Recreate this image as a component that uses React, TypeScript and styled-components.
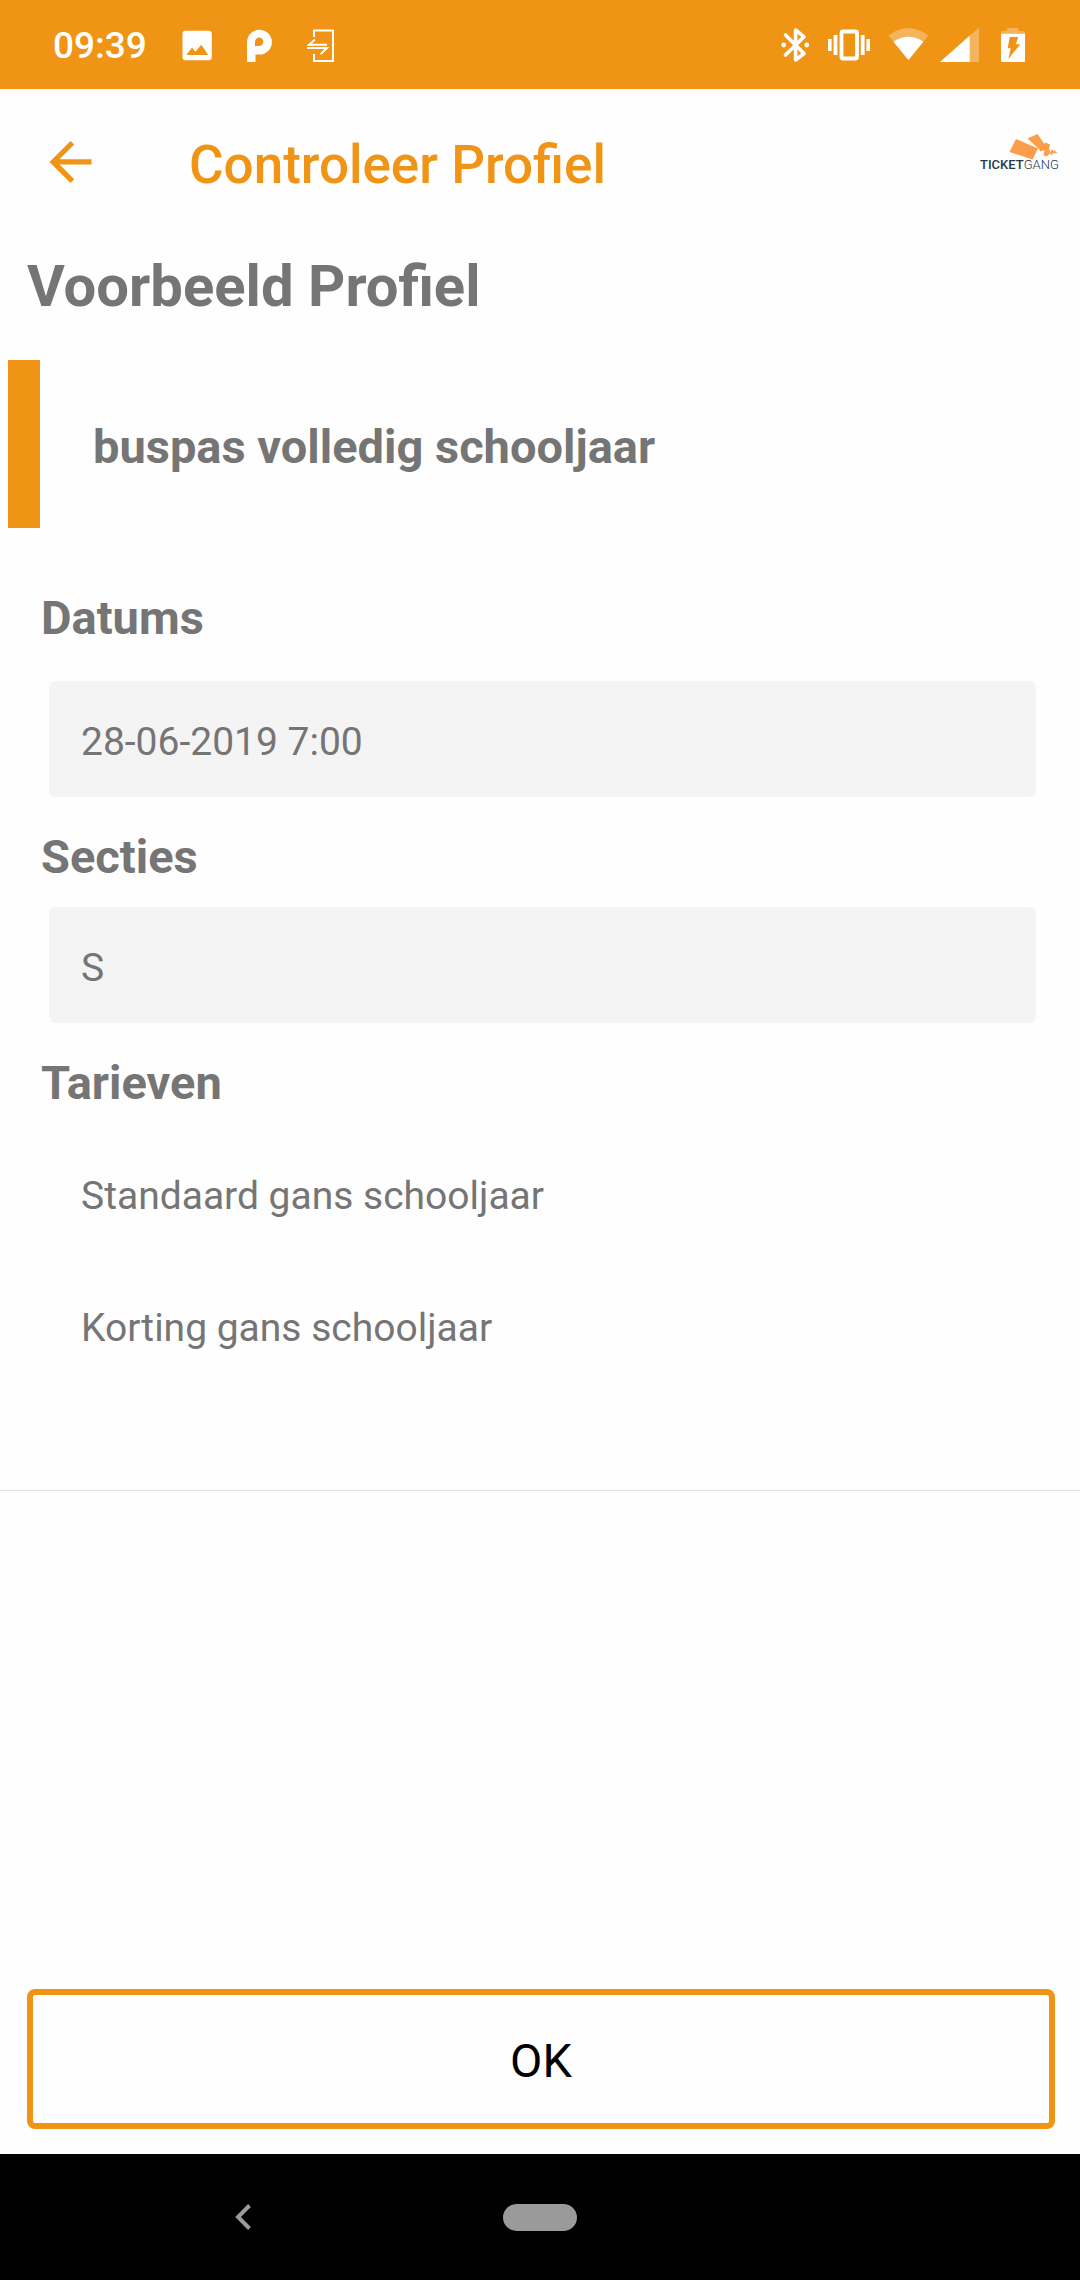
import React from 'react';
import styled, { createGlobalStyle } from 'styled-components';

const orange = '#f09415';
const grey = '#757575';

const GlobalStyle = createGlobalStyle`
  * {
    box-sizing: border-box;
  }
  body {
    margin: 0;
    background: #fefefe;
    color: ${grey};
    font-family: Roboto, "Liberation Sans", sans-serif;
  }
  h1, h2, h3, p, ul {
    margin: 0;
    padding: 0;
  }
  button, input {
    font: inherit;
  }
`;

const Page = styled.div`
  display: flex;
  flex-direction: column;
  min-height: 100vh;
`;

const StatusBar = styled.div`
  display: flex;
  align-items: center;
  justify-content: space-between;
  height: 89px;
  padding: 0 54px 0 53px;
  background: ${orange};
  color: #fff;
`;

const StatusGroup = styled.div<{ $gap: number }>`
  display: flex;
  align-items: center;
  gap: ${({ $gap }) => $gap}px;
`;

const Clock = styled.time`
  padding-top: 2px;
  font-size: 37px;
  font-weight: 500;
  line-height: 44px;
`;

const Glyph = styled.svg`
  display: block;
  flex: none;
`;

const Toolbar = styled.header`
  display: flex;
  align-items: center;
  height: 150px;
  padding: 0 21px 0 39px;
`;

const IconButton = styled.button`
  display: flex;
  padding: 0;
  border: 0;
  background: none;
  color: inherit;
  cursor: pointer;
`;

const BackButton = styled(IconButton)`
  margin-right: 87px;
  color: ${orange};
`;

const ScreenTitle = styled.h1`
  flex: 1;
  padding-top: 2px;
  color: ${orange};
  font-size: 53px;
  font-weight: 500;
  line-height: 64px;
`;

const Content = styled.main`
  padding: 13px 0 96px;
  border-bottom: 1px solid #dedede;
`;

const ProfileHeading = styled.h2`
  padding: 0 27px;
  font-size: 58px;
  font-weight: 700;
  line-height: 68px;
`;

const Banner = styled.div`
  display: flex;
  align-items: center;
  height: 168px;
  margin: 40px 8px 62px;
  padding: 6px 0 0 53px;
  border-left: 32px solid ${orange};
`;

const BannerName = styled.h3`
  font-size: 47px;
  font-weight: 700;
  line-height: 56px;
`;

const Section = styled.section<{ $labelGap: number }>`
  display: flex;
  flex-direction: column;
  gap: ${({ $labelGap }) => $labelGap}px;
  margin-bottom: 32px;
  padding: 0 44px 0 49px;

  &:last-child {
    margin-bottom: 0;
  }
`;

const SectionLabel = styled.label`
  margin-left: -8px;
  font-size: 47px;
  font-weight: 700;
  line-height: 56px;
`;

const ValueField = styled.input`
  width: 100%;
  height: 116px;
  padding: 6px 32px 0;
  border: 0;
  border-radius: 6px;
  outline: 0;
  background: #f4f4f4;
  color: ${grey};
  font-size: 39px;
`;

const RateList = styled.ul`
  list-style: none;
`;

const Rate = styled.li`
  padding: 0 32px;
  font-size: 39px;
  line-height: 132px;
`;

const Footer = styled.footer`
  margin-top: auto;
  padding: 25px 25px 25px 27px;
`;

const OkButton = styled.button`
  display: block;
  width: 100%;
  height: 140px;
  padding: 2px 0 0;
  border: 6px solid ${orange};
  border-radius: 8px;
  background: #fefefe;
  color: #000;
  font-size: 47px;
  cursor: pointer;
`;

const SystemNav = styled.nav`
  display: grid;
  grid-template-columns: repeat(3, 1fr);
  align-items: center;
  justify-items: center;
  height: 126px;
  padding: 0 95px;
  background: #000;
  color: #9a9a9a;
`;

const HomePill = styled.button`
  width: 74px;
  height: 27px;
  padding: 0;
  border: 0;
  border-radius: 14px;
  background: #9a9a9a;
`;

const PictureIcon = () => (
  <Glyph width="30" height="36" viewBox="0 0 30 36" fill="#fff" aria-hidden="true">
    <path
      fillRule="evenodd"
      d="M3.5 3.7h23.3a3 3 0 0 1 3 3v23.6a3 3 0 0 1-3 3H3.5a3 3 0 0 1-3-3V6.7a3 3 0 0 1 3-3zM4.3 28h22L19.3 17.7l-6 7-3.3-4.2z"
    />
  </Glyph>
);

const ParkingIcon = () => (
  <Glyph width="25" height="36" viewBox="0 0 25 36" fill="#fff" aria-hidden="true">
    <path
      fillRule="evenodd"
      d="M0 35V15A12.4 12.4 0 0 1 12.4 2.7A12.4 12.4 0 0 1 12.4 27.6H8.5V35zM8 19V15A4.2 4.2 0 1 1 12.2 19z"
    />
  </Glyph>
);

const TransferIcon = () => (
  <Glyph width="28" height="36" viewBox="0 0 28 36" fill="none" stroke="#fff" strokeWidth="2" aria-hidden="true">
    <path d="M7 10V3.5H26V34H7V27" />
    <path d="M20 17.8H2L8 12.5" />
    <path d="M0 21H20L13.5 27.3" />
  </Glyph>
);

const BluetoothIcon = () => (
  <Glyph width="38" height="36" viewBox="0 0 38 36" aria-hidden="true">
    <path
      d="M5.5 8L24 26.5L15.6 33V3L24 9.8L5.5 28"
      fill="none"
      stroke="#fff"
      strokeWidth="3.6"
      strokeLinejoin="round"
      strokeLinecap="round"
    />
    <circle cx="3.7" cy="18" r="2.4" fill="#fff" />
    <circle cx="26.8" cy="18" r="2.4" fill="#fff" />
  </Glyph>
);

const VibrateIcon = () => (
  <Glyph width="50" height="36" viewBox="0 0 50 36" fill="#fff" aria-hidden="true">
    <rect x="13.5" y="4.5" width="15.5" height="27" rx="1.5" fill="none" stroke="#fff" strokeWidth="3.8" />
    <rect x="0" y="12" width="3.6" height="12" />
    <rect x="5.6" y="8" width="3.8" height="20" />
    <rect x="32.8" y="8" width="3.8" height="20" />
    <rect x="38.4" y="12" width="3.6" height="12" />
  </Glyph>
);

const WifiIcon = () => (
  <Glyph width="42" height="36" viewBox="0 0 42 36" fill="#fff" aria-hidden="true">
    <path d="M20.4 33L.5 8.500Q20.400-6.500 40.400 8.500z" opacity="0.3" />
    <path d="M20.4 33L5.5 14.7Q20.4 4.7 35.4 14.7z" />
  </Glyph>
);

const SignalIcon = () => (
  <Glyph width="40" height="36" viewBox="0 0 40 36" fill="#fff" aria-hidden="true">
    <path d="M0 35L39 .5V35z" opacity="0.3" />
    <path d="M0 35L29.7 8.7V35z" />
  </Glyph>
);

const BatteryIcon = () => (
  <Glyph width="36" height="36" viewBox="0 0 36 36" fill="#fff" aria-hidden="true">
    <path d="M17 1h11.3v3H34l1 1v1.7H11V5l1-1h5z" opacity="0.3" />
    <path
      fillRule="evenodd"
      d="M11 6.7H35V34a1 1 0 0 1-1 1H12a1 1 0 0 1-1-1zM19.7 10L17.7 21.3H20.7L18.3 32L30.3 17.3H25.7L28.3 10z"
    />
  </Glyph>
);

const ArrowBackIcon = () => (
  <Glyph width="63" height="63" viewBox="0 1 24 24" fill="currentColor" aria-hidden="true">
    <path d="M20 11H7.83l5.59-5.59L12 4l-8 8 8 8 1.41-1.41L7.83 13H20v-2z" />
  </Glyph>
);

const ChevronIcon = () => (
  <Glyph width="30" height="30" viewBox="0 0 30 30" fill="none" stroke="currentColor" strokeWidth="4" aria-hidden="true">
    <path d="M21.5 3.5L10 15L21.5 26.5" />
  </Glyph>
);

const TicketgangLogo = () => (
  <Glyph width="80" height="88" viewBox="0 0 80 88" role="img" aria-label="Ticketgang">
    <g fill="#fb9d49">
      <path d="M37 19L59 28.5L53.5 39.5L30.5 32z" />
      <path d="M48.5 18.5L58.5 14L66 25L63.5 28.5L60.5 29.5z" />
      <path d="M66.5 22.5L71 24.5L70 28.5L71.5 33L67.5 36.5L64.5 35L65.5 30L61 31.5L60.5 29z" />
      <path d="M71 33L73 29.5L75.5 31.5L75 29L77 32L79 33.5L74.5 33L72 35.5z" />
    </g>
    <text x="1" y="49" fill="#22384c" fontFamily="Roboto, sans-serif" fontSize="13">
      <tspan fontWeight="500">TICKET</tspan>
      <tspan fontWeight="300">GANG</tspan>
    </text>
  </Glyph>
);

const rates = ['Standaard gans schooljaar', 'Korting gans schooljaar'];

export default function App() {
  return (
    <Page>
      <GlobalStyle />
      <StatusBar>
        <StatusGroup $gap={35}>
          <Clock>09:39</Clock>
          <PictureIcon />
          <ParkingIcon />
          <TransferIcon />
        </StatusGroup>
        <StatusGroup $gap={10}>
          <BluetoothIcon />
          <VibrateIcon />
          <WifiIcon />
          <SignalIcon />
          <BatteryIcon />
        </StatusGroup>
      </StatusBar>

      <Toolbar>
        <BackButton type="button" aria-label="Terug">
          <ArrowBackIcon />
        </BackButton>
        <ScreenTitle>Controleer Profiel</ScreenTitle>
        <TicketgangLogo />
      </Toolbar>

      <Content>
        <ProfileHeading>Voorbeeld Profiel</ProfileHeading>
        <Banner>
          <BannerName>buspas volledig schooljaar</BannerName>
        </Banner>
        <Section $labelGap={35}>
          <SectionLabel htmlFor="dates">Datums</SectionLabel>
          <ValueField id="dates" readOnly value="28-06-2019 7:00" />
        </Section>
        <Section $labelGap={22}>
          <SectionLabel htmlFor="sections">Secties</SectionLabel>
          <ValueField id="sections" readOnly value="S" />
        </Section>
        <Section $labelGap={19}>
          <SectionLabel as="h3" id="rates">
            Tarieven
          </SectionLabel>
          <RateList aria-labelledby="rates">
            {rates.map((rate) => (
              <Rate key={rate}>{rate}</Rate>
            ))}
          </RateList>
        </Section>
      </Content>

      <Footer>
        <OkButton type="button">OK</OkButton>
      </Footer>

      <SystemNav aria-label="Systeem">
        <IconButton type="button" aria-label="Vorige">
          <ChevronIcon />
        </IconButton>
        <HomePill type="button" aria-label="Start" />
      </SystemNav>
    </Page>
  );
}
